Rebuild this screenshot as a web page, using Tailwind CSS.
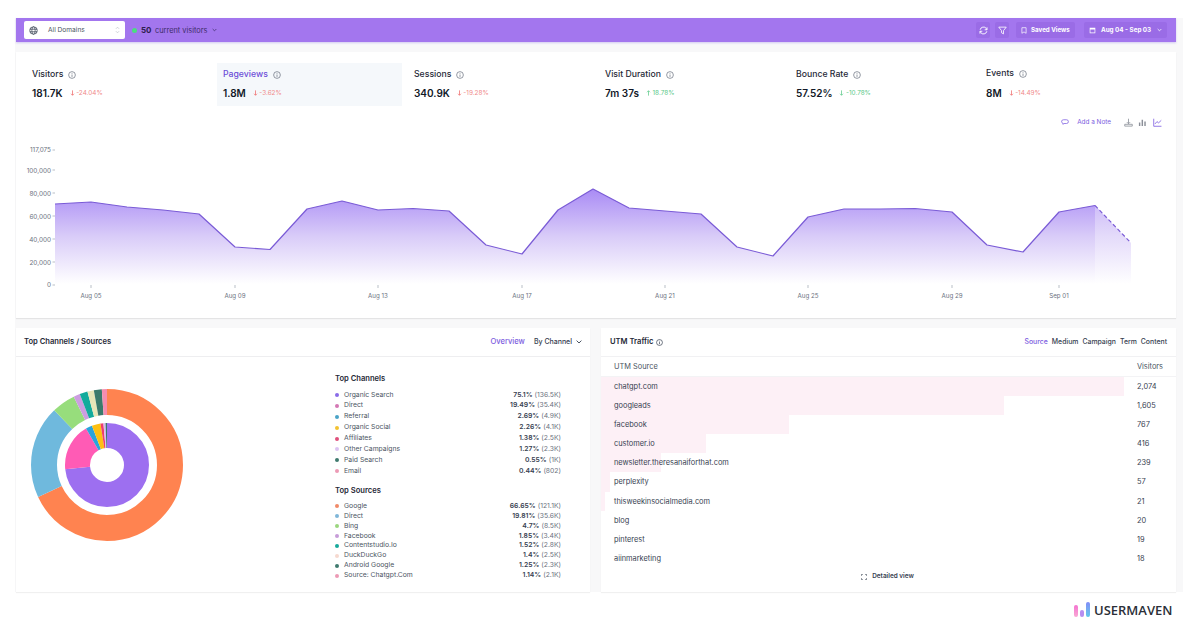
<!doctype html>
<html lang="en">
<head>
<meta charset="utf-8">
<title>Usermaven dashboard</title>
<script src="https://cdn.jsdelivr.net/npm/@tailwindcss/browser@4"></script>
</head>
<body class="bg-white font-['Inter',sans-serif]">
<div class="relative w-[1200px] h-[630px] overflow-hidden bg-white pt-[18px]">

  <!-- app area -->
  <div class="ml-[15px] w-[1168px] h-[574px] bg-[#f8f8f9] pl-[1px] pr-[7px] flex flex-col">

    <!-- top bar -->
    <div class="h-[24px] shrink-0 bg-[#a376ee] flex items-center pl-[8px] pr-[9px] shadow-[0_1px_2px_rgba(124,92,224,0.3)]">
      <div class="w-[101px] h-[18px] bg-white rounded-[2px] flex items-center pl-[5px] pr-[5px] text-[#4b5563]">
        <svg class="w-[9px] h-[9px]" viewBox="0 0 12 12" fill="none" stroke="#4b5563" stroke-width="1.1"><circle cx="6" cy="6" r="5"/><ellipse cx="6" cy="6" rx="2.2" ry="5"/><path d="M1 4.3h10M1 7.7h10"/></svg>
        <span class="ml-[10px] text-[6.6px] leading-none">All Domains</span>
        <svg class="ml-auto w-[5px] h-[8px]" viewBox="0 0 6 10" fill="none" stroke="#c4c8cf" stroke-width="1"><path d="M1 3.5 3 1.5 5 3.5M1 6.5 3 8.5 5 6.5"/></svg>
      </div>
      <span class="ml-[7px] w-[5px] h-[5px] rounded-full bg-[#4ade80]"></span>
      <span class="ml-[4px] text-[8px] font-bold text-[#2e1f4f] w-[14px]">50</span>
      <span class="mt-[1px] text-[7.4px] text-[#3f2d6b]">current visitors</span>
      <svg class="ml-[5px] w-[5px] h-[4px]" viewBox="0 0 6 4" fill="none" stroke="#3f2d6b" stroke-width="0.9"><path d="M.8.8 3 3 5.2.8"/></svg>

      <div class="ml-auto flex items-center text-white">
        <div class="w-[14px] h-[16px] bg-[#9a6ce6] rounded-[2px] flex items-center justify-center">
          <svg class="w-[9px] h-[9px]" viewBox="0 0 12 12" fill="none" stroke="white" stroke-width="1.2"><path d="M1.5 5a4.6 4.6 0 0 1 8.3-1.6L10.5 5M10.5 7a4.6 4.6 0 0 1-8.3 1.6L1.5 7"/><path d="M10.7 1.8V5H7.6M1.3 10.2V7h3.1"/></svg>
        </div>
        <div class="ml-[5px] w-[14px] h-[16px] bg-[#9a6ce6] rounded-[2px] flex items-center justify-center">
          <svg class="w-[9px] h-[9px]" viewBox="0 0 12 12" fill="none" stroke="white" stroke-width="1.1"><path d="M1 1.5h10L7.3 6.2V10.5L4.7 9V6.2z"/></svg>
        </div>
        <div class="ml-[7px] w-[59px] h-[16px] bg-[#9a6ce6] rounded-[2px] flex items-center pl-[5px]">
          <svg class="w-[6px] h-[7px]" viewBox="0 0 8 10" fill="none" stroke="white" stroke-width="1"><path d="M1 1h6v8L4 7 1 9z"/></svg>
          <span class="ml-[4px] text-[6.2px] leading-none font-bold whitespace-nowrap">Saved Views</span>
        </div>
        <div class="ml-[9px] w-[83px] h-[16px] bg-[#9a6ce6] rounded-[2px] flex items-center pl-[5px]">
          <svg class="w-[7px] h-[7px]" viewBox="0 0 10 10" fill="white"><path d="M1 1h8v8H1zM2 3.5v4.5h6V3.5z"/></svg>
          <span class="ml-[5px] text-[6.3px] leading-none font-bold whitespace-nowrap">Aug 04 - Sep 03</span>
          <svg class="ml-[6px] w-[5px] h-[4px]" viewBox="0 0 6 4" fill="none" stroke="white" stroke-width="0.9"><path d="M.8.8 3 3 5.2.8"/></svg>
        </div>
      </div>
    </div>

    <!-- metrics + chart card -->
    <div class="mt-[10px] h-[266px] shrink-0 bg-white shadow-[0_1px_1px_rgba(0,0,0,0.08)] flex flex-col">
      <div class="mt-[11px] ml-[10px] grid grid-cols-[191px_191px_191px_191px_191px_191px] h-[43px] shrink-0">
        <div class="pl-[6px] pt-[6px]">
          <div class="flex items-center h-[12px] text-[8.7px] font-medium text-[#1f2937]">Visitors
            <svg class="ml-[5px] w-[8px] h-[8px]" viewBox="0 0 10 10" fill="none" stroke="#6b7280" stroke-width="0.9"><circle cx="5" cy="5" r="4.2"/><path d="M5 4.4v3M5 2.6v.9"/></svg>
          </div>
          <div class="mt-[5px] flex items-center h-[14px]"><span class="text-[10px] font-semibold text-[#111827]">181.7K</span><svg class="ml-[7px] w-[5px] h-[6px]" viewBox="0 0 6 8" fill="none" stroke="#ef6b6b" stroke-width="1"><path d="M3 .5v6.5M1 5l2 2 2-2"/></svg><span class="ml-[1.5px] mt-[1px] text-[6.4px] text-[#f08a8a]">-24.04%</span></div>
        </div>
        <div class="pl-[6px] pt-[6px] bg-[#f5f8fb] mr-[6px]">
          <div class="flex items-center h-[12px] text-[8.7px] font-medium text-[#6d4fd8]">Pageviews
            <svg class="ml-[5px] w-[8px] h-[8px]" viewBox="0 0 10 10" fill="none" stroke="#6b7280" stroke-width="0.9"><circle cx="5" cy="5" r="4.2"/><path d="M5 4.4v3M5 2.6v.9"/></svg>
          </div>
          <div class="mt-[5px] flex items-center h-[14px]"><span class="text-[10px] font-semibold text-[#111827]">1.8M</span><svg class="ml-[7px] w-[5px] h-[6px]" viewBox="0 0 6 8" fill="none" stroke="#ef6b6b" stroke-width="1"><path d="M3 .5v6.5M1 5l2 2 2-2"/></svg><span class="ml-[1.5px] mt-[1px] text-[6.4px] text-[#f08a8a]">-3.62%</span></div>
        </div>
        <div class="pl-[6px] pt-[6px]">
          <div class="flex items-center h-[12px] text-[8.7px] font-medium text-[#1f2937]">Sessions
            <svg class="ml-[5px] w-[8px] h-[8px]" viewBox="0 0 10 10" fill="none" stroke="#6b7280" stroke-width="0.9"><circle cx="5" cy="5" r="4.2"/><path d="M5 4.4v3M5 2.6v.9"/></svg>
          </div>
          <div class="mt-[5px] flex items-center h-[14px]"><span class="text-[10px] font-semibold text-[#111827]">340.9K</span><svg class="ml-[7px] w-[5px] h-[6px]" viewBox="0 0 6 8" fill="none" stroke="#ef6b6b" stroke-width="1"><path d="M3 .5v6.5M1 5l2 2 2-2"/></svg><span class="ml-[1.5px] mt-[1px] text-[6.4px] text-[#f08a8a]">-19.28%</span></div>
        </div>
        <div class="pl-[6px] pt-[6px]">
          <div class="flex items-center h-[12px] text-[8.7px] font-medium text-[#1f2937]">Visit Duration
            <svg class="ml-[5px] w-[8px] h-[8px]" viewBox="0 0 10 10" fill="none" stroke="#6b7280" stroke-width="0.9"><circle cx="5" cy="5" r="4.2"/><path d="M5 4.4v3M5 2.6v.9"/></svg>
          </div>
          <div class="mt-[5px] flex items-center h-[14px]"><span class="text-[10px] font-semibold text-[#111827]">7m 37s</span><svg class="ml-[7px] w-[5px] h-[6px]" viewBox="0 0 6 8" fill="none" stroke="#5cc98a" stroke-width="1"><path d="M3 7.5V1M1 3l2-2 2 2"/></svg><span class="ml-[1.5px] mt-[1px] text-[6.4px] text-[#5cc98a]">18.78%</span></div>
        </div>
        <div class="pl-[6px] pt-[6px]">
          <div class="flex items-center h-[12px] text-[8.7px] font-medium text-[#1f2937]">Bounce Rate
            <svg class="ml-[5px] w-[8px] h-[8px]" viewBox="0 0 10 10" fill="none" stroke="#6b7280" stroke-width="0.9"><circle cx="5" cy="5" r="4.2"/><path d="M5 4.4v3M5 2.6v.9"/></svg>
          </div>
          <div class="mt-[5px] flex items-center h-[14px]"><span class="text-[10px] font-semibold text-[#111827]">57.52%</span><svg class="ml-[7px] w-[5px] h-[6px]" viewBox="0 0 6 8" fill="none" stroke="#5cc98a" stroke-width="1"><path d="M3 .5v6.5M1 5l2 2 2-2"/></svg><span class="ml-[1.5px] mt-[1px] text-[6.4px] text-[#5cc98a]">-10.78%</span></div>
        </div>
        <div class="pl-[5px] pt-[5px]">
          <div class="flex items-center h-[12px] text-[8.7px] font-medium text-[#1f2937]">Events
            <svg class="ml-[5px] w-[8px] h-[8px]" viewBox="0 0 10 10" fill="none" stroke="#6b7280" stroke-width="0.9"><circle cx="5" cy="5" r="4.2"/><path d="M5 4.4v3M5 2.6v.9"/></svg>
          </div>
          <div class="mt-[6px] flex items-center h-[14px]"><span class="text-[10px] font-semibold text-[#111827]">8M</span><svg class="ml-[7px] w-[5px] h-[6px]" viewBox="0 0 6 8" fill="none" stroke="#ef6b6b" stroke-width="1"><path d="M3 .5v6.5M1 5l2 2 2-2"/></svg><span class="ml-[1.5px] mt-[1px] text-[6.4px] text-[#f08a8a]">-14.49%</span></div>
        </div>
      </div>

      <div class="mt-[10px] h-[12px] shrink-0 flex items-center justify-end pr-[14px]">
        <svg class="w-[8px] h-[6px]" viewBox="0 0 10 8" fill="none" stroke="#7c5ce0" stroke-width="1"><path d="M3 1h4a2.5 2.5 0 0 1 0 5H3.6L2.2 7.2V5.7A2.4 2.4 0 0 1 3 1z"/></svg>
        <span class="ml-[8px] mt-[1px] text-[6.4px] text-[#7c5ce0]">Add a Note</span>
        <svg class="ml-[13px] w-[9px] h-[9px]" viewBox="0 0 10 10" fill="none" stroke="#8b8f98" stroke-width="0.9"><path d="M5 .8v5.4M3.2 4.6 5 6.4l1.8-1.8M.8 7h8.4v2H.8z"/></svg>
        <svg class="ml-[5px] w-[9px] h-[9px]" viewBox="0 0 10 10" fill="#8b8f98"><path d="M1 5h1.6v4H1zM4 2h1.6v7H4zM7 4h1.6v5H7z"/></svg>
        <svg class="ml-[6px] w-[9px] h-[9px]" viewBox="0 0 10 10" fill="none" stroke="#7c5ce0" stroke-width="0.9"><path d="M.8.8v8.4h8.6M2.2 6.6 4.4 4l1.8 1.4 3-2.8"/></svg>
      </div>

      <!-- viewBox uses page coordinates -->
      <svg class="block w-[1160px] h-[190px]" viewBox="16 128 1160 190">
        <defs>
          <linearGradient id="area" x1="0" y1="189" x2="0" y2="284" gradientUnits="userSpaceOnUse">
            <stop offset="0" stop-color="#a98bf5"/>
            <stop offset="0.5" stop-color="#d9ccf8"/>
            <stop offset="1" stop-color="#ffffff"/>
          </linearGradient>
        </defs>
        <path fill="url(#area)" d="M55 204 91 202 127 207 163 210 199 214 235 247 270 249.5 307 209 342 201 378 210 413 208.5 449 211 486 245 522 254 558 210 593 189 629 208 665 211 701 214 737 247 773 256 808 217 844 209 880 209 915 208.5 952 212 987 245 1023 252 1059 212 1095 205.5V284H55Z"/>
        <path fill="url(#area)" opacity="0.7" d="M1095 205.5 1131 243V284H1095Z"/>
        <path fill="none" stroke="#7a5bd6" stroke-width="1.2" stroke-linejoin="round" d="M55 204 91 202 127 207 163 210 199 214 235 247 270 249.5 307 209 342 201 378 210 413 208.5 449 211 486 245 522 254 558 210 593 189 629 208 665 211 701 214 737 247 773 256 808 217 844 209 880 209 915 208.5 952 212 987 245 1023 252 1059 212 1095 205.5"/>
        <path fill="none" stroke="#7a5bd6" stroke-width="1.2" stroke-dasharray="4 2.5" d="M1095 205.5 1131 243"/>
        <g font-family="Inter, sans-serif" font-size="6.4" fill="#6b7280" text-anchor="end">
          <text x="51" y="152">117,075</text>
          <text x="51" y="172.5">100,000</text>
          <text x="51" y="195.5">80,000</text>
          <text x="51" y="218.5">60,000</text>
          <text x="51" y="241.5">40,000</text>
          <text x="51" y="264.5">20,000</text>
          <text x="51" y="287">0</text>
        </g>
        <g stroke="#9ca3af" stroke-width="0.7">
          <path d="M52.5 150h2.5M52.5 170h2.5M52.5 193h2.5M52.5 216h2.5M52.5 239h2.5M52.5 262h2.5M52.5 285h2.5"/>
          <path d="M91 285v3M235 285v3M378 285v3M522 285v3M665 285v3M808 285v3M952 285v3M1059 285v3"/>
        </g>
        <g font-family="Inter, sans-serif" font-size="6.2" fill="#6b7280" text-anchor="middle">
          <text x="91" y="298">Aug 05</text>
          <text x="235" y="298">Aug 09</text>
          <text x="378" y="298">Aug 13</text>
          <text x="522" y="298">Aug 17</text>
          <text x="665" y="298">Aug 21</text>
          <text x="808" y="298">Aug 25</text>
          <text x="952" y="298">Aug 29</text>
          <text x="1059" y="298">Sep 01</text>
        </g>
      </svg>
    </div>

    <!-- bottom cards -->
    <div class="mt-[10px] grid grid-cols-[574px_575px] gap-[11px] h-[264px]">

      <div class="bg-white shadow-[0_1px_1px_rgba(0,0,0,0.06)] flex flex-col">
        <div class="h-[29px] shrink-0 border-b border-[#eeeef0] flex items-center pl-[8px] pr-[8px]">
          <span class="text-[7.6px] font-semibold text-[#1f2937]">Top Channels / Sources</span>
          <span class="ml-auto text-[7.6px] font-medium text-[#7c5ce0]">Overview</span>
          <span class="ml-[9px] text-[7px] font-medium text-[#374151]">By Channel</span>
          <svg class="ml-[4px] w-[6px] h-[4px]" viewBox="0 0 6 4" fill="none" stroke="#374151" stroke-width="0.9"><path d="M.6.6 3 3 5.4.6"/></svg>
        </div>
        <div class="flex">
          <svg class="ml-[11px] mt-[28px] w-[160px] h-[160px] shrink-0" viewBox="0 0 160 160" fill="none">
            <g transform="rotate(-90 80 80)" stroke-width="26">
              <circle cx="80" cy="80" r="63" pathLength="360" stroke="#ff8350" stroke-dasharray="245 360"/>
              <circle cx="80" cy="80" r="63" pathLength="360" stroke="#6fb9dd" stroke-dasharray="71 360" stroke-dashoffset="-245"/>
              <circle cx="80" cy="80" r="63" pathLength="360" stroke="#97dd7c" stroke-dasharray="18 360" stroke-dashoffset="-316"/>
              <circle cx="80" cy="80" r="63" pathLength="360" stroke="#cc9ee0" stroke-dasharray="5 360" stroke-dashoffset="-334"/>
              <circle cx="80" cy="80" r="63" pathLength="360" stroke="#12ab9c" stroke-dasharray="6 360" stroke-dashoffset="-339"/>
              <circle cx="80" cy="80" r="63" pathLength="360" stroke="#e6e6b8" stroke-dasharray="5 360" stroke-dashoffset="-345"/>
              <circle cx="80" cy="80" r="63" pathLength="360" stroke="#3a7a6c" stroke-dasharray="6 360" stroke-dashoffset="-350"/>
              <circle cx="80" cy="80" r="63" pathLength="360" stroke="#f58db0" stroke-dasharray="4 360" stroke-dashoffset="-356"/>
            </g>
            <g transform="rotate(-90 80 80)" stroke-width="25">
              <circle cx="80" cy="80" r="29.5" pathLength="360" stroke="#9d6ff0" stroke-dasharray="264 360"/>
              <circle cx="80" cy="80" r="29.5" pathLength="360" stroke="#ff5bb5" stroke-dasharray="66 360" stroke-dashoffset="-264"/>
              <circle cx="80" cy="80" r="29.5" pathLength="360" stroke="#2ba3dc" stroke-dasharray="9 360" stroke-dashoffset="-330"/>
              <circle cx="80" cy="80" r="29.5" pathLength="360" stroke="#fdc013" stroke-dasharray="12 360" stroke-dashoffset="-339"/>
              <circle cx="80" cy="80" r="29.5" pathLength="360" stroke="#ef3d6d" stroke-dasharray="4 360" stroke-dashoffset="-351"/>
              <circle cx="80" cy="80" r="29.5" pathLength="360" stroke="#d9b8f2" stroke-dasharray="3 360" stroke-dashoffset="-355"/>
              <circle cx="80" cy="80" r="29.5" pathLength="360" stroke="#3a7a6c" stroke-dasharray="2 360" stroke-dashoffset="-358"/>
            </g>
          </svg>

          <div class="ml-[148px] w-[226px] pt-[16px] text-[6.8px] leading-none">
            <div class="h-[11px] flex items-center text-[7.6px] font-semibold text-[#1f2937]">Top Channels</div>
            <div class="mt-[5.5px] flex flex-col">
              <div class="h-[10.9px] flex items-center"><span class="w-[4px] h-[4px] rounded-full bg-[#8a6be8] mr-[5px]"></span><span class="text-[#4b5563]">Organic Search</span><span class="ml-auto font-semibold text-[#374151]">75.1%</span><span class="ml-[2px] text-[#6b7280]">(136.5K)</span></div>
              <div class="h-[10.9px] flex items-center"><span class="w-[4px] h-[4px] rounded-full bg-[#d478b4] mr-[5px]"></span><span class="text-[#4b5563]">Direct</span><span class="ml-auto font-semibold text-[#374151]">19.49%</span><span class="ml-[2px] text-[#6b7280]">(35.4K)</span></div>
              <div class="h-[10.9px] flex items-center"><span class="w-[4px] h-[4px] rounded-full bg-[#4aa3c7] mr-[5px]"></span><span class="text-[#4b5563]">Referral</span><span class="ml-auto font-semibold text-[#374151]">2.69%</span><span class="ml-[2px] text-[#6b7280]">(4.9K)</span></div>
              <div class="h-[10.9px] flex items-center"><span class="w-[4px] h-[4px] rounded-full bg-[#f2c230] mr-[5px]"></span><span class="text-[#4b5563]">Organic Social</span><span class="ml-auto font-semibold text-[#374151]">2.26%</span><span class="ml-[2px] text-[#6b7280]">(4.1K)</span></div>
              <div class="h-[10.9px] flex items-center"><span class="w-[4px] h-[4px] rounded-full bg-[#e0517c] mr-[5px]"></span><span class="text-[#4b5563]">Affiliates</span><span class="ml-auto font-semibold text-[#374151]">1.38%</span><span class="ml-[2px] text-[#6b7280]">(2.5K)</span></div>
              <div class="h-[10.9px] flex items-center"><span class="w-[4px] h-[4px] rounded-full bg-[#dcc4f2] mr-[5px]"></span><span class="text-[#4b5563]">Other Campaigns</span><span class="ml-auto font-semibold text-[#374151]">1.27%</span><span class="ml-[2px] text-[#6b7280]">(2.3K)</span></div>
              <div class="h-[10.9px] flex items-center"><span class="w-[4px] h-[4px] rounded-full bg-[#3f7a6e] mr-[5px]"></span><span class="text-[#4b5563]">Paid Search</span><span class="ml-auto font-semibold text-[#374151]">0.55%</span><span class="ml-[2px] text-[#6b7280]">(1K)</span></div>
              <div class="h-[10.9px] flex items-center"><span class="w-[4px] h-[4px] rounded-full bg-[#ec9ab5] mr-[5px]"></span><span class="text-[#4b5563]">Email</span><span class="ml-auto font-semibold text-[#374151]">0.44%</span><span class="ml-[2px] text-[#6b7280]">(802)</span></div>
            </div>
            <div class="mt-[8.5px] h-[11px] flex items-center text-[7.6px] font-semibold text-[#1f2937]">Top Sources</div>
            <div class="mt-[5px] flex flex-col">
              <div class="h-[9.95px] flex items-center"><span class="w-[4px] h-[4px] rounded-full bg-[#f08a68] mr-[5px]"></span><span class="text-[#4b5563]">Google</span><span class="ml-auto font-semibold text-[#374151]">66.65%</span><span class="ml-[2px] text-[#6b7280]">(121.1K)</span></div>
              <div class="h-[9.95px] flex items-center"><span class="w-[4px] h-[4px] rounded-full bg-[#7fb6d8] mr-[5px]"></span><span class="text-[#4b5563]">Direct</span><span class="ml-auto font-semibold text-[#374151]">19.81%</span><span class="ml-[2px] text-[#6b7280]">(35.6K)</span></div>
              <div class="h-[9.95px] flex items-center"><span class="w-[4px] h-[4px] rounded-full bg-[#9bd67f] mr-[5px]"></span><span class="text-[#4b5563]">Bing</span><span class="ml-auto font-semibold text-[#374151]">4.7%</span><span class="ml-[2px] text-[#6b7280]">(8.5K)</span></div>
              <div class="h-[9.95px] flex items-center"><span class="w-[4px] h-[4px] rounded-full bg-[#c79cd8] mr-[5px]"></span><span class="text-[#4b5563]">Facebook</span><span class="ml-auto font-semibold text-[#374151]">1.85%</span><span class="ml-[2px] text-[#6b7280]">(3.4K)</span></div>
              <div class="h-[9.95px] flex items-center"><span class="w-[4px] h-[4px] rounded-full bg-[#17a99b] mr-[5px]"></span><span class="text-[#4b5563]">Contentstudio.Io</span><span class="ml-auto font-semibold text-[#374151]">1.52%</span><span class="ml-[2px] text-[#6b7280]">(2.8K)</span></div>
              <div class="h-[9.95px] flex items-center"><span class="w-[4px] h-[4px] rounded-full bg-[#f6d9cf] mr-[5px]"></span><span class="text-[#4b5563]">DuckDuckGo</span><span class="ml-auto font-semibold text-[#374151]">1.4%</span><span class="ml-[2px] text-[#6b7280]">(2.5K)</span></div>
              <div class="h-[9.95px] flex items-center"><span class="w-[4px] h-[4px] rounded-full bg-[#3f7a6e] mr-[5px]"></span><span class="text-[#4b5563]">Android Google</span><span class="ml-auto font-semibold text-[#374151]">1.25%</span><span class="ml-[2px] text-[#6b7280]">(2.3K)</span></div>
              <div class="h-[9.95px] flex items-center"><span class="w-[4px] h-[4px] rounded-full bg-[#ec9ab5] mr-[5px]"></span><span class="text-[#4b5563]">Source: Chatgpt.Com</span><span class="ml-auto font-semibold text-[#374151]">1.14%</span><span class="ml-[2px] text-[#6b7280]">(2.1K)</span></div>
            </div>
          </div>
        </div>
      </div>

      <div class="bg-white shadow-[0_1px_1px_rgba(0,0,0,0.06)] flex flex-col">
        <div class="h-[29px] shrink-0 border-b border-[#f1f1f3] flex items-center pl-[9px] pr-[9px]">
          <span class="text-[7.6px] font-semibold text-[#1f2937]">UTM Traffic</span>
          <svg class="ml-[3px] w-[7px] h-[7px]" viewBox="0 0 10 10" fill="none" stroke="#374151" stroke-width="1"><circle cx="5" cy="5" r="4.2"/><path d="M5 4.4v3M5 2.6v.9"/></svg>
          <div class="ml-auto flex gap-[4px] text-[6.9px] font-medium text-[#374151]">
            <span class="text-[#7c5ce0]">Source</span><span>Medium</span><span>Campaign</span><span>Term</span><span>Content</span>
          </div>
        </div>
        <div class="h-[20px] shrink-0 border-b border-[#f3f3f5] flex items-center justify-between pl-[13px] pr-[13px] text-[7.4px] text-[#4b5563]">
          <span>UTM Source</span><span>Visitors</span>
        </div>
        <div class="flex flex-col text-[7.4px] text-[#374151]">
          <div class="relative h-[19.1px] flex items-center justify-between pl-[13px] pr-[20px]"><span class="absolute left-0 inset-y-0 w-[523px] bg-[#fdf0f6]"></span><span class="relative">chatgpt.com</span><span class="relative w-[19px]">2,074</span></div>
          <div class="relative h-[19.1px] flex items-center justify-between pl-[13px] pr-[20px]"><span class="absolute left-0 inset-y-0 w-[403px] bg-[#fdf0f6]"></span><span class="relative">googleads</span><span class="relative w-[19px]">1,605</span></div>
          <div class="relative h-[19.1px] flex items-center justify-between pl-[13px] pr-[20px]"><span class="absolute left-0 inset-y-0 w-[188px] bg-[#fdf0f6]"></span><span class="relative">facebook</span><span class="relative w-[19px]">767</span></div>
          <div class="relative h-[19.1px] flex items-center justify-between pl-[13px] pr-[20px]"><span class="absolute left-0 inset-y-0 w-[105px] bg-[#fdf0f6]"></span><span class="relative">customer.io</span><span class="relative w-[19px]">416</span></div>
          <div class="relative h-[19.1px] flex items-center justify-between pl-[13px] pr-[20px]"><span class="absolute left-0 inset-y-0 w-[60px] bg-[#fdf0f6]"></span><span class="relative">newsletter.theresanaiforthat.com</span><span class="relative w-[19px]">239</span></div>
          <div class="relative h-[19.1px] flex items-center justify-between pl-[13px] pr-[20px]"><span class="absolute left-0 inset-y-0 w-[9px] bg-[#fdf0f6]"></span><span class="relative">perplexity</span><span class="relative w-[19px]">57</span></div>
          <div class="relative h-[19.1px] flex items-center justify-between pl-[13px] pr-[20px]"><span class="absolute left-0 inset-y-0 w-[4px] bg-[#fdf0f6]"></span><span class="relative">thisweekinsocialmedia.com</span><span class="relative w-[19px]">21</span></div>
          <div class="h-[19.1px] flex items-center justify-between pl-[13px] pr-[20px]"><span>blog</span><span class="w-[19px]">20</span></div>
          <div class="h-[19.1px] flex items-center justify-between pl-[13px] pr-[20px]"><span>pinterest</span><span class="w-[19px]">19</span></div>
          <div class="h-[19.1px] flex items-center justify-between pl-[13px] pr-[20px]"><span>aiinmarketing</span><span class="w-[19px]">18</span></div>
        </div>
        <div class="mt-[4px] flex items-center justify-center pr-[2px] text-[6.4px] font-semibold text-[#374151]">
          <svg class="w-[6px] h-[6px] mr-[5px]" viewBox="0 0 8 8" fill="none" stroke="#374151" stroke-width="0.9"><path d="M.6 2.4V.6h1.8M5.6.6h1.8v1.8M7.4 5.6v1.8H5.6M2.4 7.4H.6V5.6"/></svg>
          Detailed view
        </div>
      </div>
    </div>
  </div>

  <!-- logo -->
  <div class="absolute left-[1074px] top-[602px] flex items-center">
    <div class="flex items-end gap-[1.5px] h-[15px]">
      <span class="w-[4px] h-[12px] rounded-[2px] bg-gradient-to-b from-[#f472d0] to-[#f9a8d4]"></span>
      <span class="w-[4.5px] h-[7px] rounded-[2px] bg-[#b68ef0]"></span>
      <span class="w-[4.5px] h-[15px] rounded-[2px] bg-gradient-to-b from-[#818cf8] to-[#5ec8e8]"></span>
    </div>
    <span class="ml-[4px] mt-[1px] text-[13px] leading-none font-semibold text-[#2b2f38] font-['Open_Sans',sans-serif]">USERMAVEN</span>
  </div>
</div>
</body>
</html>
